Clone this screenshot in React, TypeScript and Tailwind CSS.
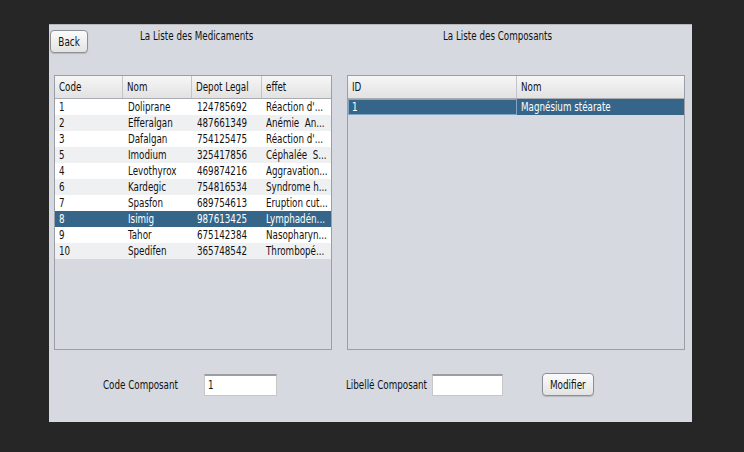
import type { ReactNode } from 'react';

const medicaments = [
  { code: '1', nom: 'Doliprane', depot: '124785692', effet: "Réaction d'..." },
  { code: '2', nom: 'Efferalgan', depot: '487661349', effet: 'Anémie  An...' },
  { code: '3', nom: 'Dafalgan', depot: '754125475', effet: "Réaction d'..." },
  { code: '5', nom: 'Imodium', depot: '325417856', effet: 'Céphalée  S...' },
  { code: '4', nom: 'Levothyrox', depot: '469874216', effet: 'Aggravation...' },
  { code: '6', nom: 'Kardegic', depot: '754816534', effet: 'Syndrome h...' },
  { code: '7', nom: 'Spasfon', depot: '689754613', effet: 'Eruption cut...' },
  { code: '8', nom: 'Isimig', depot: '987613425', effet: 'Lymphadén...' },
  { code: '9', nom: 'Tahor', depot: '675142384', effet: 'Nasopharyn...' },
  { code: '10', nom: 'Spedifen', depot: '365748542', effet: 'Thrombopé...' },
];

const font = { fontFamily: '"DejaVu Sans Condensed", "DejaVu Sans", "Liberation Sans", sans-serif' };

// the swing font is narrower than anything installed, squeeze it a bit
const T = ({ children }: { children: ReactNode }) => (
  <span className="inline-block whitespace-pre origin-left scale-x-[0.81]">{children}</span>
);

const HeaderCell = ({ label, w, last }: { label: string; w: string; last?: boolean }) => (
  <div className={`${w} h-full flex items-center pl-[4px] overflow-hidden ${last ? '' : 'border-r border-[#c3c5c9]'}`}>
    <T>{label}</T>
  </div>
);

const AquaButton = ({ label, className }: { label: string; className: string }) => (
  <button
    className={`${className} rounded-[4px] border border-[#8d8f93] bg-gradient-to-b from-[#fbfbfb] to-[#e3e3e3] text-[12px] text-[#111] shadow-[0_1px_1px_rgba(0,0,0,0.15)] flex items-center justify-center`}
  >
    <span className="inline-block whitespace-nowrap scale-x-[0.82]">{label}</span>
  </button>
);

export default function App() {
  return (
    <div className="w-[744px] h-[452px] bg-[#262626] pt-[24px] pl-[49px]" style={font}>
      <div className="w-[643px] h-[398px] bg-[#d6d9e0] border-t border-[#b4b6ba] flex flex-col text-[12px] text-[#111]">
        {/* top labels */}
        <div className="flex h-[50px]">
          <AquaButton label="Back" className="ml-[1px] mt-[5px] w-[38px] h-[23px]" />
          <div className="ml-[52px] mt-[2px] w-[303px]"><T>La Liste des Medicaments</T></div>
          <div className="mt-[2px]"><T>La Liste des Composants</T></div>
        </div>

        {/* tables */}
        <div className="flex h-[275px]">
          <div className="ml-[5px] w-[278px] h-full border border-[#9a9ea6] flex flex-col">
            <div className="h-[23px] flex bg-gradient-to-b from-[#f6f6f6] to-[#e2e2e2] border-b border-[#a9acb1]">
              <HeaderCell label="Code" w="w-[68px]" />
              <HeaderCell label="Nom" w="w-[69px]" />
              <HeaderCell label="Depot Legal" w="w-[70px]" />
              <HeaderCell label="effet" w="flex-1" last />
            </div>
            {medicaments.map((m, i) => {
              const selected = m.code === '8';
              const bg = selected ? 'bg-[#35668a] text-white' : i % 2 === 0 ? 'bg-white' : 'bg-[#eff0f2]';
              return (
                <div key={m.code} className={`h-[16px] flex items-center ${bg}`}>
                  <div className="w-[68px] pl-[4px] overflow-hidden"><T>{m.code}</T></div>
                  <div className="w-[69px] pl-[5px] overflow-hidden"><T>{m.nom}</T></div>
                  <div className="w-[70px] pl-[5px] overflow-hidden"><T>{m.depot}</T></div>
                  <div className="flex-1 pl-[4px] overflow-hidden"><T>{m.effet}</T></div>
                </div>
              );
            })}
          </div>

          <div className="ml-[15px] w-[338px] h-full border border-[#9a9ea6] flex flex-col">
            <div className="h-[23px] flex bg-gradient-to-b from-[#f6f6f6] to-[#e2e2e2] border-b border-[#a9acb1]">
              <HeaderCell label="ID" w="w-[169px]" />
              <HeaderCell label="Nom" w="flex-1" last />
            </div>
            <div className="h-[16px] flex bg-[#35668a] text-white">
              <div className="w-[169px] pl-[3px] border border-[#7fa6c8] flex items-center"><T>1</T></div>
              <div className="flex-1 pl-[4px] flex items-center"><T>Magnésium stéarate</T></div>
            </div>
          </div>
        </div>

        {/* form */}
        <div className="flex items-center mt-[23px] h-[23px]">
          <div className="ml-[54px] w-[101px]"><T>Code Composant</T></div>
          <div className="w-[73px] h-[22px] bg-white border border-[#c6c7c9] border-t-[#9c9ea1] border-t-2 pl-[3px] flex items-center"><T>1</T></div>
          <div className="ml-[69px] w-[86px]"><T>Libellé Composant</T></div>
          <div className="w-[71px] h-[22px] bg-white border border-[#c6c7c9] border-t-[#9c9ea1] border-t-2" />
          <AquaButton label="Modifier" className="ml-[39px] w-[52px] h-[23px]" />
        </div>
      </div>
    </div>
  );
}
